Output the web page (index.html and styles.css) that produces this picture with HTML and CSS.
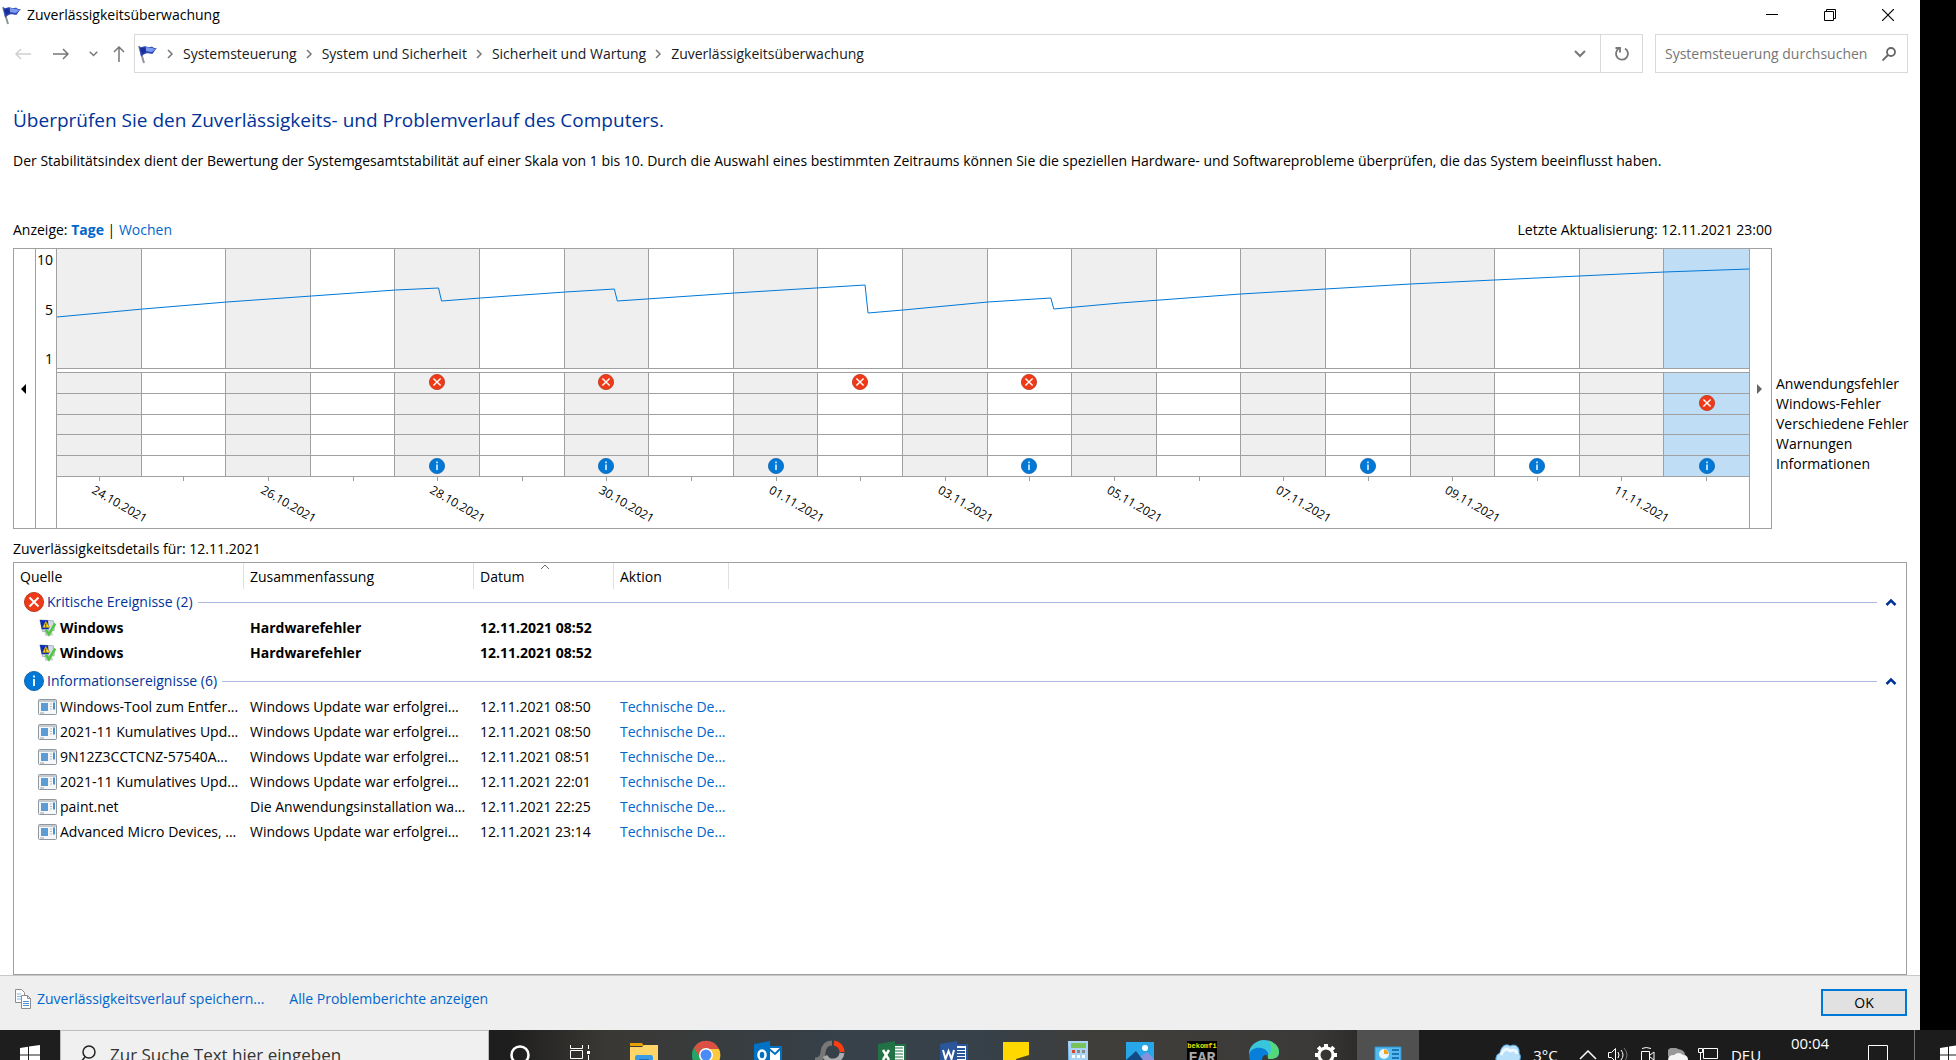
FILE: index.html
```html
<!DOCTYPE html>
<html lang="de">
<head>
    <meta charset="UTF-8">
    <meta name="viewport" content="width=device-width, initial-scale=1.0">
    <title>Zuverlässigkeitsüberwachung</title>
    <link rel="stylesheet" href="styles.css">
</head>
<body>

<!-- Wiederverwendete Symbole -->
<svg class="symbols" aria-hidden="true">
    <symbol id="flag" viewBox="0 0 20 20">
        <path d="M1 2l5 17" stroke="#8e959c" stroke-width="2"/>
        <path d="M1 2.500c3 2 4-1 7 0s4 1 6 0c1 1 3 2 5 2-2 1-3 3-4 5-3 1-4-1-7 0s-3 2-5 3z" fill="#2c46b8"/>
        <path d="M8 3c2 0 4 2 6 .5 1 1 3 1.500 4 1.500-2 1-3 2-4 3-3 0-4-1-6-1z" fill="#7d9cf0"/>
        <path d="M2 4c2 1 3-1 5 0l1 4c-2 0-3 1-4 2z" fill="#1a2c96"/>
    </symbol>
    <symbol id="error" viewBox="0 0 20 20">
        <circle cx="10" cy="10" r="9.500" fill="#f03a17" stroke="#b7391f"/>
        <path d="M5.500 5.500l9 9M14.500 5.500l-9 9" stroke="#fff" stroke-width="1.800"/>
    </symbol>
    <symbol id="info" viewBox="0 0 20 20">
        <circle cx="10" cy="10" r="9.500" fill="#0078d7" stroke="#1765a8"/>
        <path d="M10 8v7M10 4.500v2" stroke="#fff" stroke-width="1.800"/>
    </symbol>
    <symbol id="repair" viewBox="0 0 20 20">
        <path d="M6 14l8 0 2 4-9 1z" fill="#c9cdd2"/>
        <path d="M1 1l15 1 1 11-13 1z" fill="#d5dbe5" stroke="#a6adba"/>
        <path d="M1 1l9 .5 1 10-8 0z" fill="#0a2cb5"/>
        <path d="M7.500 2.500l4.500 7H4z" fill="#ffd51c" stroke="#a88400" stroke-width=".6"/>
        <path d="M7.500 5v2.500M7.500 8v1" stroke="#222"/>
        <path d="M7.500 12l3.500 5 7-12" fill="none" stroke="#4fc83f" stroke-width="2.800"/>
    </symbol>
    <symbol id="program" viewBox="0 0 20 18">
        <rect x=".5" y="1.500" width="18" height="15" rx="1" fill="#f6f7f8" stroke="#8f979f"/>
        <path d="M1 3h17" stroke="#c6ccd2" stroke-width="2"/>
        <rect x="3" y="5" width="7" height="8" fill="#5b9cd4"/>
        <path d="M12 6h2M12 8.500h2M12 11h2" stroke="#b8bec5"/>
        <path d="M16 4.500v7" stroke="#4b91d0" stroke-width="2"/>
        <path d="M2 15h4" stroke="#9ba2a9"/>
    </symbol>
    <symbol id="crumb" viewBox="0 0 8 10"><path d="M2 1l4 4-4 4" fill="none" stroke="#777" stroke-width="1.500"/></symbol>
    <symbol id="chevron-down" viewBox="0 0 12 8"><path d="M1 1l5 5 5-5" fill="none" stroke="#777" stroke-width="2"/></symbol>
    <symbol id="chevron-up" viewBox="0 0 12 8"><path d="M1.500 7L6 2.500 10.500 7" fill="none" stroke="#003399" stroke-width="2.500"/></symbol>
    <symbol id="windows" viewBox="0 0 20 20"><path d="M0 3l8-1.200v7.700H0zM9 1.600L20 0v9.500H9zM0 10.500h8v7.700L0 17zM9 10.500h11V20L9 18.400z" fill="#fff"/></symbol>
</svg>

<div class="desktop">
    <div class="window">
        <header class="titlebar">
            <svg class="flag"><use href="#flag"/></svg>
            <span class="title">Zuverlässigkeitsüberwachung</span>
            <button type="button" class="win-btn" aria-label="Minimieren"><svg width="12" height="12"><path d="M0 5.500h12" stroke="#000"/></svg></button>
            <button type="button" class="win-btn" aria-label="Wiederherstellen"><svg width="12" height="12" fill="none" stroke="#000"><path d="M.5 2.500h9v9h-9zM2.500 2V.5h9v9H10"/></svg></button>
            <button type="button" class="win-btn" aria-label="Schließen"><svg width="12" height="12"><path d="M0 0l12 12M12 0L0 12" stroke="#000" stroke-width="1.200"/></svg></button>
        </header>

        <nav class="navbar">
            <div class="nav-buttons">
                <button type="button" class="nav-btn" aria-label="Zurück"><svg width="16" height="12" fill="none" stroke="#d0d0d0" stroke-width="1.500"><path d="M16 6H1M6 1L1 6l5 5"/></svg></button>
                <button type="button" class="nav-btn" aria-label="Vorwärts"><svg width="16" height="12" fill="none" stroke="#777" stroke-width="1.500"><path d="M0 6h15M10 1l5 5-5 5"/></svg></button>
                <button type="button" class="nav-btn small" aria-label="Verlauf"><svg width="9" height="6"><use href="#chevron-down"/></svg></button>
                <button type="button" class="nav-btn small" aria-label="Nach oben"><svg width="12" height="16" fill="none" stroke="#777" stroke-width="1.500"><path d="M6 16V1M1 6l5-5 5 5"/></svg></button>
            </div>
            <div class="address">
                <svg class="flag"><use href="#flag"/></svg>
                <svg class="crumb"><use href="#crumb"/></svg>
                <a href="#">Systemsteuerung</a>
                <svg class="crumb"><use href="#crumb"/></svg>
                <a href="#">System und Sicherheit</a>
                <svg class="crumb"><use href="#crumb"/></svg>
                <a href="#">Sicherheit und Wartung</a>
                <svg class="crumb"><use href="#crumb"/></svg>
                <a href="#">Zuverlässigkeitsüberwachung</a>
                <button type="button" class="address-drop" aria-label="Frühere Orte"><svg width="12" height="8"><use href="#chevron-down"/></svg></button>
                <button type="button" class="refresh" aria-label="Aktualisieren"><svg width="16" height="16" fill="none" stroke="#777" stroke-width="1.800"><path d="M11 2.500a6 6 0 1 1-6.500.3M1.500 2h4.500v4.500"/></svg></button>
            </div>
            <div class="search">
                <input type="text" placeholder="Systemsteuerung durchsuchen" aria-label="Systemsteuerung durchsuchen">
                <svg width="14" height="14" fill="none" stroke="#666" stroke-width="1.800"><circle cx="9" cy="5" r="4"/><path d="M6 8l-5.500 5.500"/></svg>
            </div>
        </nav>

        <main class="content">
            <h1>Überprüfen Sie den Zuverlässigkeits- und Problemverlauf des Computers.</h1>
            <p class="description">Der Stabilitätsindex dient der Bewertung der Systemgesamtstabilität auf einer Skala von 1 bis 10. Durch die Auswahl eines bestimmten Zeitraums können Sie die speziellen Hardware- und Softwareprobleme überprüfen, die das System beeinflusst haben.</p>

            <div class="chart-row">
                <div class="chart-column">
                    <div class="chart-head">
                        <span>Anzeige: <a href="#" class="active">Tage</a> | <a href="#">Wochen</a></span>
                        <span>Letzte Aktualisierung: 12.11.2021 23:00</span>
                    </div>
                    <div class="chart">
                        <button type="button" class="scroll-btn" aria-label="Früher"><svg width="6" height="10"><path d="M5 0v10L0 5z" fill="#000"/></svg></button>
                        <div class="scale"><span>10</span><span>5</span><span>1</span></div>
                        <div class="plot">
                            <div class="days" id="days"></div>
                            <svg class="trend" viewBox="0 0 1694 119" preserveAspectRatio="none">
                                <polyline points="0,68 86,60 170,53 255,47 339,41 382,39 385,52 424,49 509,43 558,40 561,52 678,44 809,36 812,64 847,61 932,53 995,49 998,60 1064,54 1185,45 1270,40 1355,35 1439,31 1524,27 1609,23 1694,20"/>
                            </svg>
                        </div>
                        <button type="button" class="scroll-btn later" aria-label="Später"><svg width="6" height="10"><path d="M0 0v10l5-5z" fill="#666"/></svg></button>
                    </div>
                </div>
                <div class="legend">
                    <span>Anwendungsfehler</span>
                    <span>Windows-Fehler</span>
                    <span>Verschiedene Fehler</span>
                    <span>Warnungen</span>
                    <span>Informationen</span>
                </div>
            </div>

            <p class="details-label">Zuverlässigkeitsdetails für: 12.11.2021</p>
            <div class="list">
                <table>
                    <colgroup><col class="c-source"><col class="c-summary"><col class="c-date"><col class="c-action"><col></colgroup>
                    <thead>
                        <tr>
                            <th>Quelle</th>
                            <th>Zusammenfassung</th>
                            <th class="sorted">Datum<svg width="10" height="6"><path d="M1 5l4-4 4 4" fill="none" stroke="#666"/></svg></th>
                            <th>Aktion</th>
                            <td></td>
                        </tr>
                    </thead>
                    <tbody>
                        <tr class="group">
                            <td colspan="5"><button type="button"><svg width="20" height="20"><use href="#error"/></svg><span>Kritische Ereignisse (2)</span><i></i><svg width="12" height="8"><use href="#chevron-up"/></svg></button></td>
                        </tr>
                        <tr class="critical"><td><svg class="row-icon"><use href="#repair"/></svg>Windows</td><td>Hardwarefehler</td><td>12.11.2021 08:52</td><td></td><td></td></tr>
                        <tr class="critical"><td><svg class="row-icon"><use href="#repair"/></svg>Windows</td><td>Hardwarefehler</td><td>12.11.2021 08:52</td><td></td><td></td></tr>
                    </tbody>
                    <tbody>
                        <tr class="group second">
                            <td colspan="5"><button type="button"><svg width="20" height="20"><use href="#info"/></svg><span>Informationsereignisse (6)</span><i></i><svg width="12" height="8"><use href="#chevron-up"/></svg></button></td>
                        </tr>
                        <tr><td><svg class="row-icon"><use href="#program"/></svg>Windows-Tool zum Entfer...</td><td>Windows Update war erfolgrei...</td><td>12.11.2021 08:50</td><td><a href="#">Technische De...</a></td><td></td></tr>
                        <tr><td><svg class="row-icon"><use href="#program"/></svg>2021-11 Kumulatives Upd...</td><td>Windows Update war erfolgrei...</td><td>12.11.2021 08:50</td><td><a href="#">Technische De...</a></td><td></td></tr>
                        <tr><td><svg class="row-icon"><use href="#program"/></svg>9N12Z3CCTCNZ-57540A...</td><td>Windows Update war erfolgrei...</td><td>12.11.2021 08:51</td><td><a href="#">Technische De...</a></td><td></td></tr>
                        <tr><td><svg class="row-icon"><use href="#program"/></svg>2021-11 Kumulatives Upd...</td><td>Windows Update war erfolgrei...</td><td>12.11.2021 22:01</td><td><a href="#">Technische De...</a></td><td></td></tr>
                        <tr><td><svg class="row-icon"><use href="#program"/></svg>paint.net</td><td>Die Anwendungsinstallation wa...</td><td>12.11.2021 22:25</td><td><a href="#">Technische De...</a></td><td></td></tr>
                        <tr><td><svg class="row-icon"><use href="#program"/></svg>Advanced Micro Devices, ...</td><td>Windows Update war erfolgrei...</td><td>12.11.2021 23:14</td><td><a href="#">Technische De...</a></td><td></td></tr>
                    </tbody>
                </table>
            </div>
        </main>

        <footer class="footer">
            <svg width="16" height="20" fill="#fff" stroke="#8c8c8c"><path d="M.5.5h6l3 3v10h-9z"/><path d="M2 5h4M2 7.500h4M2 10h4" stroke="#7db4ea"/><path d="M6.500 6.500h6l3 3v10h-9z"/><path d="M12.500 6.500v3h3" fill="none"/><path d="M8 12.500h6M8 14.500h6M8 16.500h6" stroke="#4b91dd"/></svg>
            <a href="#">Zuverlässigkeitsverlauf speichern...</a>
            <a href="#" class="reports">Alle Problemberichte anzeigen</a>
            <button type="button" class="ok">OK</button>
        </footer>
    </div>
</div>

<div class="taskbar">
    <button type="button" class="start" aria-label="Start"><svg width="20" height="20"><use href="#windows"/></svg></button>
    <label class="task-search">
        <svg width="18" height="20" fill="none" stroke="#222" stroke-width="1.500"><circle cx="10" cy="7" r="6"/><path d="M6 12l-5 6"/></svg>
        <input type="text" placeholder="Zur Suche Text hier eingeben" aria-label="Zur Suche Text hier eingeben">
    </label>
    <div class="apps">
        <button type="button" aria-label="Cortana"><svg viewBox="0 0 30 30"><circle cx="15" cy="15" r="8.500" fill="none" stroke="#fff" stroke-width="2.500"/></svg></button>
        <button type="button" aria-label="Aktive Anwendungen"><svg viewBox="0 0 30 30" fill="none" stroke="#fff"><path d="M3.500 5v3.500h12V5M3.500 10.500h12v8h-12zM3.500 25v-4h12v4M21.500 5v4M21.500 15v9"/><path d="M20 12.500h3" stroke-width="3"/></svg></button>
        <button type="button" aria-label="Explorer"><svg viewBox="0 0 30 30"><path d="M1 3h12l2 3H1z" fill="#e8a100"/><path d="M1 7h12l2-2h14v22H1z" fill="#ffd667"/><path d="M6 27V17q0-2 2-2h14q2 0 2 2v10z" fill="#3c9be8"/><path d="M10 20h10" stroke="#1f6fbd" stroke-width="2"/></svg></button>
        <button type="button" aria-label="Chrome"><svg viewBox="0 0 30 30"><circle cx="15" cy="15" r="14" fill="#24a566"/><path d="M3 8A14 14 0 0 1 28 9H15z" fill="#dd4f43"/><path d="M15 9h13a14 14 0 0 1-13 20l6-11z" fill="#fdc83c"/><path d="M3 8l7 11 5-10z" fill="#dd4f43"/><path d="M2.500 9a14 14 0 0 0 12 20l4-8-8-2z" fill="#24a566"/><circle cx="15" cy="15" r="7" fill="#fff"/><circle cx="15" cy="15" r="5.500" fill="#4c8bf5"/></svg></button>
        <button type="button" aria-label="Outlook"><svg viewBox="0 0 30 30"><path d="M14 7h14v16H14z" fill="#fff" stroke="#0072c6" stroke-width="2"/><path d="M15 8l7 6 6-6" fill="none" stroke="#0072c6" stroke-width="2"/><path d="M1 4l16-3v28L1 26z" fill="#0072c6"/><ellipse cx="9" cy="15" rx="3.500" ry="4.500" fill="none" stroke="#fff" stroke-width="2.500"/></svg></button>
        <button type="button" aria-label="Diagnose"><svg viewBox="0 0 30 30" fill="none" stroke-width="5"><path d="M17 3q-8 0-9 9 0 8-8 8" stroke="#777"/><path d="M19 3a9 9 0 0 1 8 9" stroke="#ff3d12"/><path d="M27 13a9 9 0 0 1-17 3" stroke="#aaa"/></svg></button>
        <button type="button" aria-label="Excel"><svg viewBox="0 0 30 30"><path d="M15 5h13v20H15z" fill="#fff" stroke="#217346" stroke-width="2"/><path d="M18 8h8M18 11h8M18 14h8M18 17h8M18 20h8" stroke="#217346"/><path d="M1 4l17-3v28L1 26z" fill="#217346"/><path d="M6 10l6 10M12 10L6 20" stroke="#fff" stroke-width="2.500"/></svg></button>
        <button type="button" aria-label="Word"><svg viewBox="0 0 30 30"><path d="M15 5h13v20H15z" fill="#fff" stroke="#2b579a" stroke-width="2"/><path d="M18 9h8M18 12h8M18 15h8M18 18h8" stroke="#2b579a" stroke-width="2"/><path d="M1 4l17-3v28L1 26z" fill="#2b579a"/><path d="M4 10l2.500 9L9.500 11l3 8L15 10" fill="none" stroke="#fff" stroke-width="2"/></svg></button>
        <button type="button" aria-label="Kurznotizen"><svg viewBox="0 0 30 30"><path d="M2 2h26v14L18 28H2z" fill="#ffd800"/><path d="M15 19l13-4v4L17 29z" fill="#4a4326"/></svg></button>
        <button type="button" aria-label="Rechner"><svg viewBox="0 0 30 30"><path d="M5 1h20v29H5z" fill="#6aaee5"/><path d="M5 1h20v29H7z" fill="#a8d3f5"/><path d="M8 3h15v5H8z" fill="#79c35a"/><path d="M9 10h3v3H9z" fill="#d5442e"/><path d="M14 10h3v3h-3zM19 10h3v3h-3z" fill="#888"/><path d="M9 15h3v3H9zM14 15h3v3h-3zM19 15h3v3h-3zM9 20h3v3H9z" fill="#fff"/></svg></button>
        <button type="button" aria-label="Fotos"><svg viewBox="0 0 30 30"><path d="M1 2h28v26H1z" fill="#27a7e8"/><path d="M15 17l7-5 7 7v9H10z" fill="#8a91dc"/><path d="M1 20l10-9 13 17H1z" fill="#124a85"/><circle cx="20" cy="8" r="3" fill="#fff"/></svg></button>
        <button type="button" aria-label="FAR"><svg viewBox="0 0 30 30"><path d="M0 1h30v29H0z" fill="#000"/><text x="15" y="8" class="far-small">bekomfi</text><text x="15" y="22" class="far-large">FAR</text></svg></button>
        <button type="button" aria-label="Edge"><svg viewBox="0 0 30 30"><path d="M0 15A15 14 0 0 1 15 0c9 0 15 6 15 12 0 5-4 7-9 7-3 0-2-2-2-4 0-4-4-7-9-6-5 0-8 3-10 6z" fill="#39c6dd"/><path d="M20 1c6 2 10 6 10 11 0 5-4 7-9 7-3 0-2-2-2-4 3-1 5-6 1-14z" fill="#55d879"/><path d="M0 14c2-5 7-7 12-6 5 1 7 4 7 8-2-2-6-1-6 4 0 4 3 8 6 9C8 32 0 24 0 14z" fill="#087fdb"/></svg></button>
        <button type="button" aria-label="Einstellungen"><svg viewBox="0 0 30 30" fill="none" stroke="#fff"><circle cx="15" cy="15" r="7" stroke-width="3"/><path d="M15 4v4M15 22v4M4 15h4M22 15h4M7.200 7.200l3 3M20 20l3 3M22.800 7.200l-3 3M7.200 22.800l3-3" stroke-width="4"/></svg></button>
        <button type="button" class="current" aria-label="Systemsteuerung"><svg viewBox="0 0 30 30"><path d="M2 7h26v20H2z" fill="#55baf0" stroke="#2c91d4"/><circle cx="11" cy="14" r="5" fill="#e6f4fb"/><path d="M11 14V9.500a4.500 4.500 0 0 1 4.500 4.500z" fill="#f4a21d"/><path d="M19 10h7M19 14h7M19 18h7" stroke="#1c74b8" stroke-width="2"/></svg></button>
    </div>
    <div class="tray">
        <button type="button" class="weather"><svg width="28" height="28" viewBox="0 0 28 28"><path d="M5 23a6 6 0 0 1 1-11C7 5 12 2 16 5c6-3 10 2 9 7 3 4 1 9-3 10z" fill="#b9e0fb" stroke="#4e9fd9"/><path d="M7 14c2-6 6-7 9-4 4-2 7 0 7 3" fill="none" stroke="#eef9ff" stroke-width="3"/></svg>3°C</button>
        <button type="button" aria-label="Ausgeblendete Symbole"><svg width="18" height="10" fill="none" stroke="#fff" stroke-width="1.500"><path d="M1 9l8-8 8 8"/></svg></button>
        <button type="button" aria-label="Lautstärke"><svg width="20" height="16" fill="none" stroke="#fff"><path d="M.5 5.500h3l4-4v13l-4-4h-3zM10 5q2 3 0 6M13 3q4 5 0 10"/><path d="M16 1q6 7 0 14" stroke="#777"/></svg></button>
        <button type="button" aria-label="Kamera"><svg width="16" height="18" fill="none" stroke="#fff"><path d="M1.500 5.500h8v9h-8zM10 9l4-3v8l-4-3M2 2.500q4-2 9 0M2 17.500h9"/></svg></button>
        <button type="button" aria-label="OneDrive"><svg width="20" height="14"><path d="M1 9a6 5 0 0 1 9-8q7 1 7 6l3 5H2z" fill="#999"/><path d="M0 12q0-5 6-5 5-4 9 0 5 0 5 5-1 2-4 2H3q-3 0-3-2z" fill="#f4f4f4"/></svg></button>
        <button type="button" aria-label="Netzwerk"><svg width="20" height="16" fill="none" stroke="#fff"><path d="M5.500 1.500h14v10h-14zM.5 1.500h4v4h-4zM2.500 6v9H13"/></svg></button>
        <button type="button" class="lang">DEU</button>
        <button type="button" class="clock">00:04</button>
        <button type="button" class="notify" aria-label="Benachrichtigungen"><svg width="20" height="20" fill="none" stroke="#fff"><path d="M.5.5h19v15h-6l-4 4v-4h-9z"/></svg></button>
    </div>
    <button type="button" class="start next" aria-label="Start"><svg width="20" height="20"><use href="#windows"/></svg></button>
</div>

<script src="script.js"></script>
</body>
</html>
```
FILE: styles.css
```css
* {
    box-sizing: border-box;
}
body {
    margin: 0;
    height: 100vh;
    display: flex;
    flex-direction: column;
    overflow: hidden;
    background: #000;
    color: #000;
    font-family: "Segoe UI", "Open Sans", sans-serif;
    font-size: 14px;
    line-height: 20px;
}
h1, p {
    margin: 0;
    font-weight: normal;
}
a {
    color: #0066cc;
    text-decoration: none;
}
button {
    display: flex;
    align-items: center;
    justify-content: center;
    padding: 0;
    border: none;
    background: none;
    font: inherit;
    color: inherit;
}
input {
    min-width: 0;
    padding: 0;
    border: none;
    outline: none;
    background: none;
    font: inherit;
}
svg {
    display: block;
    flex: none;
}
.symbols {
    position: absolute;
    width: 0;
    height: 0;
}

/* Fenster */
.desktop {
    flex: 1;
    min-height: 0;
    padding-right: 36px;
}
.window {
    height: 100%;
    display: flex;
    flex-direction: column;
    background: #fff;
}
.flag {
    width: 20px;
    height: 20px;
}
.titlebar {
    display: flex;
    align-items: center;
    height: 30px;
    padding: 0 3px 0 2px;
}
.title {
    flex: 1;
    padding-left: 5px;
}
.win-btn {
    width: 58px;
    height: 30px;
}

/* Navigation */
.navbar {
    display: flex;
    height: 43px;
    padding: 4px 12px 0 4px;
}
.nav-buttons {
    display: flex;
    width: 130px;
}
.nav-btn {
    width: 38px;
}
.nav-btn.small {
    width: 26px;
}
.address {
    flex: 1;
    display: flex;
    align-items: center;
    padding-left: 3px;
    border: 1px solid #d9d9d9;
}
.address a {
    color: #1a1a1a;
}
.crumb {
    width: 8px;
    height: 10px;
    margin: 0 9px 0 8px;
}
.address-drop {
    width: 40px;
    height: 100%;
    margin-left: auto;
}
.refresh {
    width: 42px;
    height: 100%;
    border-left: 1px solid #d9d9d9;
}
.search {
    display: flex;
    align-items: center;
    width: 253px;
    margin-left: 12px;
    padding: 0 11px 0 9px;
    border: 1px solid #d9d9d9;
}
.search input {
    flex: 1;
}
.search input::placeholder {
    color: #767676;
    opacity: 1;
}

/* Inhalt */
.content {
    flex: 1;
    min-height: 0;
    display: flex;
    flex-direction: column;
    padding: 33px 13px 0;
}
h1 {
    color: #003399;
    font-size: 19px;
    line-height: 28px;
}
.description {
    margin-top: 17px;
    white-space: nowrap;
}
.chart-row {
    display: flex;
    margin-top: 49px;
}
.chart-column {
    flex: 1;
}
.chart-head {
    display: flex;
    justify-content: space-between;
    margin-bottom: 8px;
}
.active {
    font-weight: bold;
}
.chart {
    display: flex;
    height: 281px;
    border: 1px solid #a0a0a0;
}
.scroll-btn {
    width: 21px;
    padding-right: 2px;
}
.scroll-btn.later {
    width: 22px;
    border-left: 1px solid #a0a0a0;
}
.scale {
    display: flex;
    flex-direction: column;
    justify-content: space-between;
    width: 22px;
    padding: 1px 3px 159px 0;
    border-left: 1px solid #a0a0a0;
    border-right: 1px solid #a0a0a0;
    text-align: right;
}
.plot {
    position: relative;
    flex: 1;
}
.days {
    display: flex;
}
.day {
    position: relative;
    flex: 1;
    min-width: 0;
}
.day-trend {
    height: 120px;
    border-right: 1px solid #a0a0a0;
    border-bottom: 1px solid #a0a0a0;
}
.day-events {
    display: grid;
    grid-template-rows: repeat(5, 1fr);
    height: 105px;
    margin-top: 3px;
    border-top: 1px solid #a0a0a0;
    border-right: 1px solid #a0a0a0;
}
.day:nth-child(odd) .day-trend,
.day:nth-child(odd) .day-events {
    background: #efefef;
}
.day.selected .day-trend,
.day.selected .day-events {
    background: #bfddf5;
    border-right: none;
}
.event {
    display: flex;
    align-items: center;
    justify-content: center;
    padding-bottom: 1px;
    border-bottom: 1px solid #a0a0a0;
}
.event svg {
    width: 16px;
    height: 16px;
}
.tick {
    width: 1px;
    height: 4px;
    margin: 0 auto;
    background: #a0a0a0;
}
.date {
    position: absolute;
    left: 47%;
    top: 233px;
    font-size: 12px;
    line-height: 16px;
    white-space: nowrap;
    transform: rotate(30deg);
    transform-origin: left top;
}
.trend {
    position: absolute;
    left: 0;
    top: 0;
    width: 100%;
    height: 119px;
}
.trend polyline {
    fill: none;
    stroke: #0078d7;
    stroke-width: 1;
    vector-effect: non-scaling-stroke;
}
.legend {
    display: flex;
    flex-direction: column;
    width: 135px;
    padding: 154px 0 0 4px;
    white-space: nowrap;
}

/* Ereignisliste */
.details-label {
    margin-top: 10px;
}
.list {
    flex: 1;
    min-height: 0;
    margin-top: 3px;
    border: 1px solid #a0a0a0;
    overflow: hidden;
}
table {
    width: 100%;
    table-layout: fixed;
    border-collapse: separate;
    border-spacing: 0;
}
.c-source,
.c-summary {
    width: 230px;
}
.c-date {
    width: 140px;
}
.c-action {
    width: 115px;
}
th {
    position: relative;
    height: 26px;
    padding: 2px 6px 0;
    border-right: 1px solid #e0e0e0;
    font-weight: normal;
    text-align: left;
}
.sorted svg {
    position: absolute;
    left: 66px;
    top: 1px;
}
td {
    height: 25px;
    padding: 0 6px;
    white-space: nowrap;
}
.critical {
    font-weight: bold;
}
.row-icon {
    display: inline-block;
    width: 20px;
    height: 18px;
    margin: -4px 2px -2px 18px;
    vertical-align: middle;
}
.group td {
    height: 26px;
    padding: 0 9px 0 10px;
}
.group.second td {
    height: 29px;
    padding-top: 3px;
}
.group button {
    width: 100%;
    gap: 3px;
    color: #003399;
}
.group i {
    flex: 1;
    height: 1px;
    margin: 0 5px 0 2px;
    background: #aebbe0;
}

/* Fußzeile */
.footer {
    display: flex;
    align-items: flex-start;
    height: 55px;
    padding: 13px 13px 0 15px;
    border-top: 1px solid #c8c8c8;
    background: #efefef;
}
.footer a {
    margin-left: 6px;
}
.footer .reports {
    margin-left: 25px;
}
.ok {
    width: 86px;
    height: 27px;
    margin-left: auto;
    border: 2px solid #0078d7;
    background: #e1e1e1;
}

/* Taskleiste, unten vom Bildschirmrand abgeschnitten */
.taskbar {
    display: flex;
    flex: none;
    height: 50px;
    margin-bottom: -20px;
    background: linear-gradient(90deg, #1e1e1e 0, #1e1e1e 26%, #3a3834 31%, #36414a 43%, #36414a 50%, #403e3b 56%, #3b3a38 67%, #1c1c1c 72%);
    color: #fff;
}
.start {
    width: 60px;
}
.start.next {
    width: 42px;
    padding-left: 25px;
    justify-content: flex-start;
    border-left: 1px solid #777;
}
.task-search {
    display: flex;
    align-items: center;
    gap: 13px;
    width: 429px;
    padding-left: 18px;
    border: 1px solid #bbb;
    background: #f0f0f0;
    font-size: 17px;
}
.task-search input {
    flex: 1;
}
.task-search input::placeholder {
    color: #333;
    opacity: 1;
}
.apps {
    display: flex;
}
.apps button {
    width: 62px;
}
.apps svg {
    width: 30px;
    height: 30px;
}
.apps .current {
    background: #505050;
}
.far-small,
.far-large {
    font-family: "Liberation Mono", monospace;
    font-weight: bold;
    text-anchor: middle;
}
.far-small {
    font-size: 7px;
    fill: #e6e600;
}
.far-large {
    font-size: 15px;
    fill: #aaa;
}
.tray {
    display: flex;
    margin-left: auto;
    padding-right: 9px;
    font-size: 15px;
}
.tray button {
    width: 30px;
}
.tray .weather {
    width: 86px;
    padding-right: 8px;
    gap: 11px;
}
.tray .lang {
    width: 46px;
}
.tray .clock {
    width: 82px;
    align-items: flex-start;
    padding-top: 3px;
}
.tray .notify {
    width: 54px;
}
```
FILE: script.js
```js
// Ein Eintrag pro Tag: Datum (nur jeder zweite wird beschriftet) und Ereignisse je Zeile
const labels = ['24.10.2021', '26.10.2021', '28.10.2021', '30.10.2021', '01.11.2021',
    '03.11.2021', '05.11.2021', '07.11.2021', '09.11.2021', '11.11.2021'];
const errors = { 4: 0, 6: 0, 9: 0, 11: 0, 19: 1 };
const infos = [4, 6, 8, 11, 15, 17, 19];

let html = '';
for (let day = 0; day < 20; day++) {
    html += `<div class="day${day === 19 ? ' selected' : ''}"><div class="day-trend"></div><div class="day-events">`;
    for (let row = 0; row < 5; row++) {
        let icon = '';
        if (errors[day] === row) icon = 'error';
        if (row === 4 && infos.includes(day)) icon = 'info';
        html += `<div class="event">${icon ? `<svg><use href="#${icon}"/></svg>` : ''}</div>`;
    }
    html += '</div><div class="tick"></div>';
    if (day % 2 === 0) html += `<span class="date">${labels[day / 2]}</span>`;
    html += '</div>';
}
document.getElementById('days').innerHTML = html;
```
